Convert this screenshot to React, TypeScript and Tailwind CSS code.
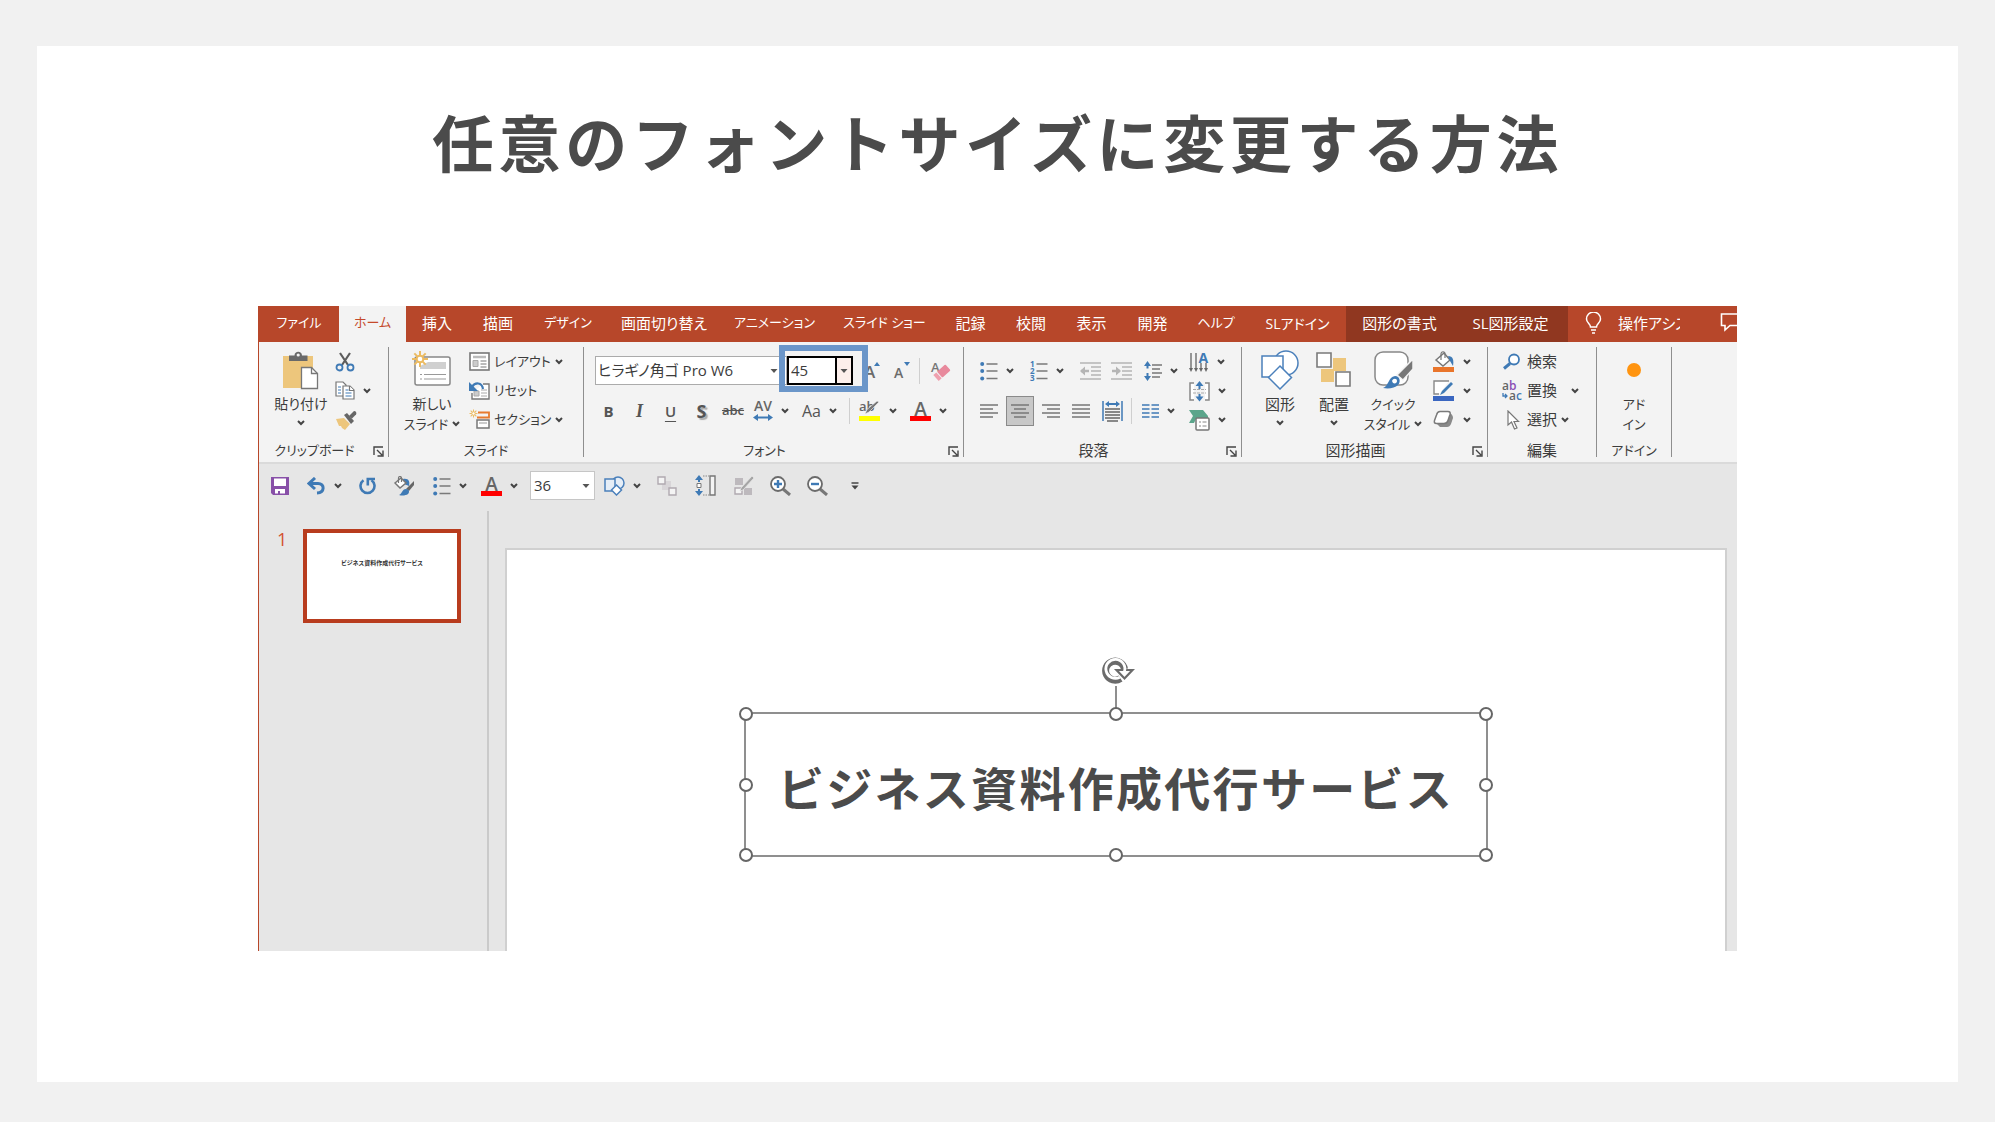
import { useState } from "react"
import type { ReactNode } from "react"
import clsx from "clsx"

const tabs = [
  { label: "ファイル", style: "w-[80px] text-[13px]" },
  { label: "ホーム", style: "w-[67px] text-[13px]" },
  { label: "挿入", style: "w-[62px] text-[15px]" },
  { label: "描画", style: "w-[60px] text-[15px]" },
  { label: "デザイン", style: "w-[80px] text-[13px]" },
  { label: "画面切り替え", style: "w-[112px] text-[15px]" },
  { label: "アニメーション", style: "w-[109px] text-[13px]" },
  { label: "スライド ショー", style: "w-[111px] text-[13px]" },
  { label: "記録", style: "w-[61px] text-[15px]" },
  { label: "校閲", style: "w-[60px] text-[15px]" },
  { label: "表示", style: "w-[61px] text-[15px]" },
  { label: "開発", style: "w-[61px] text-[15px]" },
  { label: "ヘルプ", style: "w-[66px] text-[13px]" },
  { label: "SLアドイン", style: "w-[97px] text-[14px]" },
  { label: "図形の書式", style: "w-[107px] text-[15px] bg-[#903720]" },
  { label: "SL図形設定", style: "w-[115px] text-[15px] bg-[#903720]" },
]

function Chevron() {
  return (
    <svg width="8" height="6" viewBox="0 0 8 6" fill="none" className="shrink-0">
      <path d="M1 1l3 3 3-3" stroke="#444" strokeWidth="2" />
    </svg>
  )
}

function Arrow() {
  return (
    <svg width="8" height="4" viewBox="0 0 8 4" className="shrink-0">
      <path d="M0.5 0h7L4 4z" fill="#555" />
    </svg>
  )
}

type ToolProps = { name: string; className?: string; children: ReactNode; menu?: boolean }

function Tool({ name, className, children, menu }: ToolProps) {
  return (
    <button type="button" aria-label={name} className={clsx("flex shrink-0 items-center gap-2", className)}>
      {children}
      {menu && <Chevron />}
    </button>
  )
}

function Sep({ className }: { className?: string }) {
  return <span className={clsx("h-[26px] w-px shrink-0 bg-[#cfcfcf]", className)} />
}

type GroupProps = { label: string; small?: boolean; className: string; launcher?: boolean; children: ReactNode }

function Group({ label, small, className, launcher, children }: GroupProps) {
  return (
    <section className={clsx("mt-[5px] flex h-[110px] shrink-0 flex-col border-r border-[#8e8e8e]", className)}>
      <div className="flex h-[97px]">{children}</div>
      <div className={clsx("relative flex h-[13px] items-start justify-center", launcher && "pr-[18px]")}>
        <span className={clsx("leading-3", small ? "text-[13px]" : "text-[15px]")}>{label}</span>
        {launcher && (
          <button type="button" aria-label={`${label}の設定`} className="absolute right-1 bottom-0">
            <svg width="11" height="11" viewBox="0 0 11 11" fill="none" stroke="#444" strokeWidth="1.4">
              <path d="M1 9V1h9M4 4l5 5M10 4.500v5.500H4.500" />
            </svg>
          </button>
        )}
      </div>
    </section>
  )
}

function BigButton({ icon, className, children }: { icon: ReactNode; className?: string; children: ReactNode }) {
  return (
    <button type="button" className={clsx("flex flex-col items-center pt-[3px] leading-5", className)}>
      <span className="mb-1 flex h-10 items-center justify-center">{icon}</span>
      {children}
    </button>
  )
}

/* ---- icons ---- */

function PasteIcon() {
  return (
    <svg width="38" height="40" viewBox="0 0 38 40">
      <path d="M1 6h30v32H1z" fill="#edc67c" />
      <path d="M7 5.500h5.500c0-5 7.500-5 7.500 0H25.500V11H7z" fill="#696969" />
      <circle cx="16.200" cy="5" r="1.600" fill="#f3f3f3" />
      <path d="M19.500 17.500h10l6 6v15h-16z" fill="#fff" stroke="#777" strokeWidth="1.300" />
      <path d="M29.500 17.500v6h6" fill="none" stroke="#777" strokeWidth="1.300" />
    </svg>
  )
}

function CutIcon() {
  return (
    <svg width="20" height="20" viewBox="0 0 20 20" fill="none">
      <path d="M5 1l8 12M15 1L7 13" stroke="#5c5c5c" strokeWidth="2.200" />
      <circle cx="4.500" cy="15.500" r="3" stroke="#3f7ab5" strokeWidth="1.800" />
      <circle cx="15.500" cy="15.500" r="3" stroke="#3f7ab5" strokeWidth="1.800" />
    </svg>
  )
}

function CopyIcon() {
  return (
    <svg width="20" height="20" viewBox="0 0 20 20" fill="#fff" stroke="#777" strokeWidth="1.200">
      <path d="M1 1h7l3 3v11H1z" />
      <path d="M3 6h3M3 9h3M3 12h3" stroke="#3f7ab5" />
      <path d="M8 5h7l4 4v9H8z" />
      <path d="M14.500 5v4.500H19" />
      <path d="M10.500 9h3M10.500 12h6M10.500 15h6" stroke="#3f7ab5" />
    </svg>
  )
}

function BrushIcon() {
  return (
    <svg width="22" height="20" viewBox="0 0 22 20">
      <path d="M1 9l8-1 6 6-5 6-3-2-1-2-2 0z" fill="#edc67c" />
      <path d="M9 5l3-2 7 8-3 3z" fill="#666" />
      <path d="M14 6l5-5c2 0 3 2 2 3.500l-4 4z" fill="#666" />
    </svg>
  )
}

function Burst({ x, y, r }: { x: number; y: number; r: number }) {
  const rays = [0, 45, 90, 135]
  return (
    <g stroke="#ecbb62" strokeWidth={r / 4}>
      {rays.map((a) => (
        <path key={a} d={`M${x - r} ${y}h${r * 2}`} transform={`rotate(${a} ${x} ${y})`} />
      ))}
      <circle cx={x} cy={y} r={r / 2.400} fill="#fff" />
    </g>
  )
}

function NewSlideIcon() {
  return (
    <svg width="40" height="38" viewBox="0 0 40 38">
      <rect x="3" y="6" width="35" height="28" rx="2" fill="#fff" stroke="#888" strokeWidth="1.500" />
      <path d="M16 11h18v7H8v-3z" fill="#d0d0d0" />
      <path d="M8 23.500h2M12 23.500h22M8 28h2M12 28h22" stroke="#999" strokeWidth="1.200" />
      <Burst x={8} y={8} r={8} />
    </svg>
  )
}

function LayoutIcon() {
  return (
    <svg width="21" height="19" viewBox="0 0 21 19" fill="none" stroke="#777">
      <rect x="1" y="1" width="19" height="17" strokeWidth="1.600" fill="#fff" />
      <path d="M4 5h13" strokeWidth="2.500" stroke="#bbb" />
      <path d="M4 8.500h5v6H4z" fill="#ccc" stroke="#aaa" />
      <path d="M11.500 9h6M11.500 12h6M11.500 15h6" />
    </svg>
  )
}

function ResetIcon() {
  return (
    <svg width="21" height="19" viewBox="0 0 21 19" fill="none" stroke="#777">
      <path d="M14 3h6v15H3v-6" strokeWidth="1.400" fill="#fff" />
      <path d="M5 10h5v5H5z" fill="#ccc" stroke="#aaa" />
      <path d="M12 9h6M12 12h6M12 15h6" stroke="#aaa" />
      <path d="M14 8C13 1 6 1 3 6" stroke="#3f7ab5" strokeWidth="2.200" />
      <path d="M0 1v9h9z" fill="#3f7ab5" stroke="none" />
    </svg>
  )
}

function SectionIcon() {
  return (
    <svg width="21" height="21" viewBox="0 0 21 21" fill="none">
      <path d="M9 3.500h11v5H8" stroke="#e77b2f" strokeWidth="1.800" />
      <path d="M8 11h12v8H8z" stroke="#777" strokeWidth="1.500" fill="#fff" />
      <path d="M10 14h8" stroke="#999" />
      <Burst x={4.500} y={4.500} r={4} />
    </svg>
  )
}

function FontColorIcon({ bar }: { bar: string }) {
  return (
    <svg width="21" height="22" viewBox="0 0 21 22" className="overflow-visible">
      <text x="10.500" y="16" textAnchor="middle" fontSize="19" fontWeight="600" fill="#666" fontFamily="Open Sans, sans-serif">
        A
      </text>
      <path d="M0 16h21v5H0z" fill={bar} />
    </svg>
  )
}

function HighlightIcon() {
  return (
    <svg width="22" height="22" viewBox="0 0 22 22" className="overflow-visible">
      <text x="0" y="11" fontSize="13" fontWeight="600" fill="#666" fontFamily="Open Sans, sans-serif">
        ab
      </text>
      <path d="M20 2L10 12l-4 2 2-4.500L18 1z" fill="#777" stroke="#f3f3f3" strokeWidth="0.600" />
      <path d="M0 16h21v5H0z" fill="#ff0" />
    </svg>
  )
}

function EraserIcon() {
  return (
    <svg width="20" height="22" viewBox="0 0 20 22" className="overflow-visible">
      <text x="0" y="12" fontSize="13" fontWeight="600" fill="#777" fontFamily="Open Sans, sans-serif">
        A
      </text>
      <g transform="rotate(-42 11 12)">
        <rect x="2.500" y="8.500" width="4" height="8" fill="#f0a0ae" />
        <rect x="7.500" y="8.500" width="11" height="8" rx="1" fill="#e8899c" />
      </g>
    </svg>
  )
}

function GrowIcon({ down }: { down?: boolean }) {
  return (
    <svg width="20" height="20" viewBox="0 0 20 20" className="overflow-visible">
      <text x="1" y="17" fontSize={down ? 14 : 17} fontWeight="600" fill="#6b6b6b" fontFamily="Open Sans, sans-serif">
        A
      </text>
      <path d={down ? "M11 1h6l-3 4z" : "M11 5h6l-3-4z"} fill="#3f7ab5" />
    </svg>
  )
}

function SpacingIcon() {
  return (
    <svg width="20" height="22" viewBox="0 0 20 22" className="overflow-visible">
      <text x="10" y="11" textAnchor="middle" fontSize="14" fontWeight="600" fill="#666" fontFamily="Open Sans, sans-serif">
        AV
      </text>
      <path d="M3 17.500h14" stroke="#3f7ab5" strokeWidth="2" />
      <path d="M5 14v7l-5-3.500zM15 14v7l5-3.500z" fill="#3f7ab5" />
    </svg>
  )
}

function BulletsIcon() {
  return (
    <svg width="18" height="20" viewBox="0 0 18 20">
      <path d="M6.500 3h11M6.500 10h11M6.500 17.500h11" stroke="#7a7a7a" strokeWidth="1.500" />
      <g fill="#3f7ab5">
        <circle cx="2.200" cy="3" r="2" />
        <circle cx="2.200" cy="10" r="2" />
        <circle cx="2.200" cy="17.500" r="2" />
      </g>
    </svg>
  )
}

function NumbersIcon() {
  return (
    <svg width="18" height="22" viewBox="0 0 18 22" className="overflow-visible">
      <path d="M6.500 4h11M6.500 11h11M6.500 18.500h11" stroke="#7a7a7a" strokeWidth="1.500" />
      <g fontSize="8" fontWeight="700" fill="#3f7ab5" fontFamily="Open Sans, sans-serif">
        <text x="0" y="7">1</text>
        <text x="0" y="14">2</text>
        <text x="0" y="21">3</text>
      </g>
    </svg>
  )
}

function IndentIcon({ right }: { right?: boolean }) {
  return (
    <svg width="21" height="18" viewBox="0 0 21 18" stroke="#b5b5b5" strokeWidth="1.500">
      <path d="M0 1h21M11 5h10M11 9h10M11 13h10M0 17h21" />
      <path d="M1 9h8" strokeWidth="2.500" />
      <path d={right ? "M5 4.500L10 9l-5 4.500z" : "M5 4.500L0 9l5 4.500z"} fill="#b5b5b5" stroke="none" />
    </svg>
  )
}

function LineSpacingIcon() {
  return (
    <svg width="18" height="22" viewBox="0 0 18 22">
      <path d="M8 5h10M8 9h8M8 13h10M8 17h8" stroke="#777" strokeWidth="1.500" />
      <path d="M3.500 4v4.500M3.500 13v5" stroke="#3f7ab5" strokeWidth="2" />
      <path d="M0 6h7L3.500 1zM0 16h7l-3.500 5z" fill="#3f7ab5" />
    </svg>
  )
}

function AlignIcon({ d }: { d: string }) {
  return (
    <svg width="18" height="16" viewBox="0 0 18 16" stroke="#777" strokeWidth="1.500">
      <path d={d} />
    </svg>
  )
}

function DistributeIcon() {
  return (
    <svg width="21" height="22" viewBox="0 0 21 22">
      <path d="M1 1v20M20 1v20" stroke="#3f7ab5" strokeWidth="1.500" />
      <path d="M5 4h11" stroke="#3f7ab5" strokeWidth="2" />
      <path d="M7 1v6L3 4zM14 1v6l4-3z" fill="#3f7ab5" />
      <path d="M3 9h15M3 12h15M3 15h15M3 18h15M5 21h11" stroke="#666" strokeWidth="1.700" />
    </svg>
  )
}

function ColumnsIcon() {
  return (
    <svg width="17" height="14" viewBox="0 0 17 14" stroke="#3f7ab5" strokeWidth="1.600">
      <path d="M0 1h7.500M0 5h7.500M0 9h7.500M0 13h7.500M9.500 1H17M9.500 5H17M9.500 9H17M9.500 13H17" />
    </svg>
  )
}

function TextDirectionIcon() {
  return (
    <svg width="20" height="22" viewBox="0 0 20 22" className="overflow-visible">
      <path d="M2 2v17M7 2v17M12 12v7M17 12v7" stroke="#777" strokeWidth="1.500" />
      <path d="M0 17h4l-2 4zM5 17h4l-2 4zM10 17h4l-2 4zM15 17h4l-2 4z" fill="#666" />
      <text x="9.500" y="12" fontSize="14" fontWeight="700" fill="#3f7ab5" fontFamily="Open Sans, sans-serif">
        A
      </text>
    </svg>
  )
}

function TextAlignIcon() {
  return (
    <svg width="21" height="22" viewBox="0 0 21 22">
      <path d="M5 3H1v17h4M16 3h4v17h-4" fill="#fff" stroke="#888" strokeWidth="1.500" />
      <path d="M4 9.500h13M4 13h13" stroke="#aaa" strokeWidth="1.200" strokeDasharray="3 1" />
      <path d="M10.500 4v5M10.500 14v4" stroke="#3f7ab5" strokeWidth="2" />
      <path d="M6.500 6h8l-4-5zM6.500 16.500h8l-4 5z" fill="#3f7ab5" />
    </svg>
  )
}

function SmartArtIcon() {
  return (
    <svg width="21" height="22" viewBox="0 0 21 22">
      <path d="M0 1h14l5 6v3H7l-2 4H0l4-7z" fill="#5ba58b" />
      <rect x="7" y="9" width="13" height="12" rx="1" fill="#fff" stroke="#777" strokeWidth="1.500" />
      <path d="M10 13h2M13.500 13h4M10 17h2M13.500 17h4" stroke="#888" strokeWidth="1.200" />
    </svg>
  )
}

function ShapesIcon() {
  return (
    <svg width="38" height="40" viewBox="0 0 38 40" fill="#fff" stroke="#4b80bb" strokeWidth="1.500">
      <circle cx="25" cy="13" r="12" />
      <path d="M1 6h21v21H1z" />
      <path d="M19 16l11.500 11.500L19 39 7.500 27.500z" />
    </svg>
  )
}

function ArrangeIcon() {
  return (
    <svg width="36" height="36" viewBox="0 0 36 36">
      <path d="M17 6h13v13H17z" fill="#edc67c" />
      <path d="M5 17h13v13H5z" fill="#edc67c" />
      <path d="M1 1h14v14H1zM20 20h14v14H20z" fill="#fff" stroke="#7a7a7a" strokeWidth="1.600" />
    </svg>
  )
}

function QuickStyleIcon() {
  return (
    <svg width="40" height="40" viewBox="0 0 40 40">
      <rect x="2" y="2" width="33" height="33" rx="8" fill="#fff" stroke="#888" strokeWidth="1.500" />
      <path d="M40 9v10L30 30l-6-5z" fill="#777" stroke="#f3f3f3" strokeWidth="1.500" />
      <path d="M10 38c6-2 5-11 12-12 5 0 6 6 3 9-3 3-9 4-15 3z" fill="#3f7ab5" />
      <path d="M19 31c1-3 5-3 5 0 0 2-2 3-4 2z" fill="#fff" />
    </svg>
  )
}

function FillIcon() {
  return (
    <svg width="22" height="22" viewBox="0 0 22 22">
      <path d="M3 9l8-7 6 7-7 6z" fill="#fff" stroke="#777" strokeWidth="1.500" />
      <path d="M8 9V3c0-3 4-3 4 0v4" fill="none" stroke="#777" strokeWidth="1.200" />
      <path d="M15 5c5 0 6 4 5 10l-3-5z" fill="#3f7ab5" />
      <path d="M0 16h21v5H0z" fill="#e9752b" />
    </svg>
  )
}

function OutlineIcon() {
  return (
    <svg width="22" height="22" viewBox="0 0 22 22">
      <path d="M16 1H1v13h5" fill="#fff" stroke="#888" strokeWidth="1.400" />
      <path d="M18 2l2 2-9 9-4 2 2-4z" fill="#3f7ab5" />
      <path d="M0 16h21v5H0z" fill="#3a66c0" />
    </svg>
  )
}

function EffectIcon() {
  return (
    <svg width="22" height="20" viewBox="0 0 22 20">
      <path d="M4 14l3 3h7c2 0 3-1 4-3l2-6c0-2-1-4-3-5z" fill="#8a8a8a" />
      <path d="M7 1.500h8c2 0 2.500 1 2 3l-2 6c-.5 2-2 3-4 3H3.500c-2 0-2.500-1-2-3l2-5.500c.5-2 1.500-3.500 3.500-3.500z" fill="#fff" stroke="#7a7a7a" strokeWidth="1.500" />
    </svg>
  )
}

function SearchIcon() {
  return (
    <svg width="20" height="18" viewBox="0 0 20 18" fill="none" stroke="#3f7ab5">
      <circle cx="11" cy="6.500" r="5" strokeWidth="1.800" fill="#fff" />
      <path d="M7 10.500l-6 5" strokeWidth="3" />
    </svg>
  )
}

function ReplaceIcon() {
  return (
    <svg
      width="20"
      height="22"
      viewBox="0 0 20 22"
      fontSize="12"
      fontWeight="600"
      fontFamily="Open Sans, sans-serif"
      className="overflow-visible"
    >
      <text x="-1" y="10" fill="#666">a</text>
      <text x="6" y="10" fill="#8a4fb5">b</text>
      <text x="6" y="20" fill="#666">a</text>
      <text x="13" y="20" fill="#3f7ab5">c</text>
      <path d="M0 13v3h4M2 14l2 2-2 2" fill="none" stroke="#3f7ab5" strokeWidth="1.300" />
    </svg>
  )
}

function PointerIcon() {
  return (
    <svg width="20" height="20" viewBox="0 0 20 20">
      <path d="M5 1v14l3.500-3 3 7 2.500-1-3-6.500h4.500z" fill="#fff" stroke="#777" strokeWidth="1.200" />
    </svg>
  )
}

function SaveIcon() {
  return (
    <svg width="18" height="18" viewBox="0 0 18 18">
      <path d="M0 0h18v18H2l-2-2z" fill="#8850a8" />
      <path d="M3 1.500h12V9H3z" fill="#fff" />
      <path d="M4 12h10v4.500H9V14H7v2.500H4z" fill="#fff" />
    </svg>
  )
}

function UndoIcon() {
  return (
    <svg width="19" height="18" viewBox="0 0 19 18" fill="none" stroke="#3f7ab5" strokeWidth="3">
      <path d="M8 1L2 6.500 8 12" />
      <path d="M2 6.500h9c7 0 7 9-1 9.500" />
    </svg>
  )
}

function RedoIcon() {
  return (
    <svg width="18" height="18" viewBox="0 0 18 18" fill="none" stroke="#3f7ab5" strokeWidth="2.600">
      <path d="M5.500 3.200a7 7 0 1 0 8 0" />
      <path d="M9.800 8.500V2H17" />
    </svg>
  )
}

function StylePaintIcon() {
  return (
    <svg width="21" height="20" viewBox="0 0 21 20">
      <path d="M9 3c6-1 7 3 6 7l-5-2z" fill="#3f7ab5" />
      <path d="M1 7l6-5 5 5-6 5z" fill="#fff" stroke="#777" strokeWidth="1.500" />
      <path d="M4.500 7V2c0-2 3-2 3 0v4" fill="none" stroke="#777" strokeWidth="1.200" />
      <path d="M20 5v4l-5 6-3-2z" fill="#666" />
      <path d="M5 19c3-1 3-6 7-6 3 0 4 3 2 5-2 1.500-6 2-9 1z" fill="#3f7ab5" />
    </svg>
  )
}

function SmallShapesIcon() {
  return (
    <svg width="21" height="20" viewBox="0 0 21 20" fill="#e6eef7" stroke="#4b80bb" strokeWidth="1.500">
      <circle cx="14" cy="7" r="6" />
      <path d="M1 3h10v12H1z" />
      <path d="M12.500 9l5 5-5 5-5-5z" fill="#fff" />
    </svg>
  )
}

function GroupIcon() {
  return (
    <svg width="20" height="20" viewBox="0 0 20 20">
      <path d="M5 5h9v9H5z" fill="#d8d5d8" />
      <path d="M1 1h7v7H1zM12 12h7v7h-7z" fill="#f4f4f4" stroke="#b0a9b0" strokeWidth="1.400" />
    </svg>
  )
}

function HeightIcon() {
  return (
    <svg width="21" height="21" viewBox="0 0 21 21">
      <path d="M2 8.500h4v4H2z" fill="#fff" stroke="#777" />
      <path d="M4 4v3M4 14v3" stroke="#3f7ab5" strokeWidth="2" />
      <path d="M0 5h8L4 0zM0 16h8l-4 5z" fill="#3f7ab5" />
      <path d="M8 1h6M8 20h6" stroke="#888" strokeDasharray="1.500 1" />
      <path d="M15 1h5v19h-5z" fill="#f4f4f4" stroke="#777" strokeWidth="1.400" />
    </svg>
  )
}

function SelectPaneIcon() {
  return (
    <svg width="20" height="20" viewBox="0 0 20 20">
      <path d="M1 2h8v7H1zM10 12h8v7h-8z" fill="#bdb9bd" />
      <path d="M1 12h7v6H1z" fill="#f4f4f4" stroke="#b0a9b0" strokeWidth="1.400" />
      <path d="M18 0l2 2L9 14l-3 1 1-3z" fill="#a5a5a5" stroke="#e6e6e6" strokeWidth="0.800" />
    </svg>
  )
}

function ZoomIcon({ plus }: { plus?: boolean }) {
  return (
    <svg width="21" height="20" viewBox="0 0 21 20" fill="none">
      <path d="M13 13l7 6" stroke="#777" strokeWidth="3" />
      <circle cx="8" cy="8" r="7" stroke="#6b6b6b" strokeWidth="1.800" fill="#fff" />
      <path d={plus ? "M4 8h8M8 4v8" : "M4 8h8"} stroke="#3f7ab5" strokeWidth="2.400" />
    </svg>
  )
}

function RotateIcon() {
  return (
    <svg width="34" height="28" viewBox="0 0 34 28" fill="none">
      <path d="M19.500 22.500A9.500 9.500 0 1 1 23.500 13" stroke="#6b6b6b" strokeWidth="7" />
      <path d="M15.500 14h16l-8 8.500z" fill="#fff" stroke="#6b6b6b" strokeWidth="2.200" />
      <path d="M18.800 21.200A9.500 9.500 0 1 1 23.500 15.500" stroke="#fff" strokeWidth="2.800" />
    </svg>
  )
}

/* ---- ribbon ---- */

function Ribbon() {
  const [font, setFont] = useState("ヒラギノ角ゴ Pro W6")
  const [size, setSize] = useState("45")

  return (
    <div className="flex h-[120px] bg-[#f3f3f3] text-[#3c3c3c]">
      <Group label="クリップボード" small launcher className="w-[130px]">
        <BigButton icon={<PasteIcon />} className="ml-3 w-[60px] text-[14px]">
          <span>貼り付け</span>
          <span className="flex h-[18px] items-center">
            <Chevron />
          </span>
        </BigButton>
        <div className="ml-1 flex flex-col">
          <Tool name="切り取り" className="h-[29px]"><CutIcon /></Tool>
          <Tool name="コピー" menu className="h-[29px]"><CopyIcon /></Tool>
          <Tool name="書式のコピー" className="h-[29px]"><BrushIcon /></Tool>
        </div>
      </Group>

      <Group label="スライド" small className="w-[195px]">
        <BigButton icon={<NewSlideIcon />} className="ml-3 w-[62px] text-[13px]">
          <span className="text-[14px]">新しい</span>
          <span className="flex items-center gap-1">
            スライド
            <Chevron />
          </span>
        </BigButton>
        <div className="ml-[6px] flex flex-col text-[13px]">
          <button type="button" className="flex h-[29px] items-center gap-1">
            <LayoutIcon />
            レイアウト
            <Chevron />
          </button>
          <button type="button" className="flex h-[29px] items-center gap-1">
            <ResetIcon />
            リセット
          </button>
          <button type="button" className="flex h-[29px] items-center gap-1">
            <SectionIcon />
            セクション
            <Chevron />
          </button>
        </div>
      </Group>

      <Group label="フォント" small launcher className="w-[380px]">
        <div className="flex flex-col gap-[11px] pt-[9px]">
          <div className="flex h-[29px] items-center pl-[11px]">
            <div className="flex h-[29px] w-[192px] items-center border border-[#ababab] bg-white pr-2">
              <select
                aria-label="フォント"
                value={font}
                onChange={(e) => setFont(e.target.value)}
                className="h-full grow appearance-none pl-[2px] text-[15px] outline-none"
              >
                <option>ヒラギノ角ゴ Pro W6</option>
                <option>メイリオ</option>
              </select>
              <Arrow />
            </div>
            <div className="relative flex h-[29px] w-[66px] border-2 border-black bg-white">
              <input
                aria-label="フォント サイズ"
                value={size}
                onChange={(e) => setSize(e.target.value)}
                className="w-[46px] pl-[2px] text-[15px] outline-none"
              />
              <button
                type="button"
                aria-label="サイズの一覧"
                className="flex grow items-center justify-center border-l-2 border-black bg-[#fcefeb]"
              >
                <Arrow />
              </button>
              {/* highlight frame */}
              <span className="pointer-events-none absolute -top-[13px] -left-[10px] z-10 h-[47px] w-[89px] border-[6px] border-[#6b96c9]" />
            </div>
            <Tool name="拡大" className="ml-[10px]"><GrowIcon /></Tool>
            <Tool name="縮小" className="ml-[10px]"><GrowIcon down /></Tool>
            <Sep className="ml-[6px]" />
            <Tool name="書式のクリア" className="ml-[11px]"><EraserIcon /></Tool>
          </div>
          <div className="flex h-[30px] items-center pl-[9px] font-['Open_Sans','Noto_Sans',sans-serif] text-[#555]">
            <button type="button" className="w-[31px] text-[15px] font-bold">B</button>
            <button type="button" className="w-[31px] font-['Liberation_Serif',serif] text-[18px] font-bold italic">I</button>
            <button type="button" className="w-[31px] text-[15px] font-semibold underline underline-offset-4">U</button>
            <button type="button" className="w-[31px] text-[18px] font-bold [text-shadow:2px_2px_1px_#aaa]">S</button>
            <button type="button" className="w-[32px] text-[13px] font-semibold line-through">abc</button>
            <Tool name="文字の間隔" menu className="ml-1"><SpacingIcon /></Tool>
            <button type="button" className="ml-[13px] flex items-center gap-2 text-[16px]">
              Aa
              <Chevron />
            </button>
            <Sep className="ml-3" />
            <Tool name="蛍光ペン" menu className="ml-[9px]"><HighlightIcon /></Tool>
            <Tool name="フォントの色" menu className="ml-[13px]"><FontColorIcon bar="#f00" /></Tool>
          </div>
        </div>
      </Group>

      <Group label="段落" launcher className="w-[278px]">
        <div className="flex w-[225px] flex-col gap-[11px] pt-[9px] pl-4">
          <div className="flex h-[29px] items-center">
            <Tool name="箇条書き" menu><BulletsIcon /></Tool>
            <Tool name="段落番号" menu className="ml-4"><NumbersIcon /></Tool>
            <Tool name="インデントを減らす" className="ml-4"><IndentIcon /></Tool>
            <Tool name="インデントを増やす" className="ml-[10px]"><IndentIcon right /></Tool>
            <Tool name="行間" menu className="ml-3"><LineSpacingIcon /></Tool>
          </div>
          <div className="flex h-[30px] items-center">
            <Tool name="左揃え"><AlignIcon d="M0 2h18M0 6h13M0 10h18M0 14h13" /></Tool>
            <Tool name="中央揃え" className="ml-2 h-[30px] w-7 justify-center border border-[#8a8a8a] bg-[#c8c8c8]">
              <AlignIcon d="M0 2h18M3 6h12M0 10h18M3 14h12" />
            </Tool>
            <Tool name="右揃え" className="ml-2"><AlignIcon d="M0 2h18M5 6h13M0 10h18M5 14h13" /></Tool>
            <Tool name="両端揃え" className="ml-3"><AlignIcon d="M0 2h18M0 6h18M0 10h18M0 14h18" /></Tool>
            <Tool name="均等割り付け" className="ml-3"><DistributeIcon /></Tool>
            <Sep className="ml-2" />
            <Tool name="段組み" menu className="ml-[10px]"><ColumnsIcon /></Tool>
          </div>
        </div>
        <div className="flex flex-col">
          <Tool name="文字列の方向" menu className="h-[29px]"><TextDirectionIcon /></Tool>
          <Tool name="文字の配置" menu className="h-[29px]"><TextAlignIcon /></Tool>
          <Tool name="SmartArt に変換" menu className="h-[29px]"><SmartArtIcon /></Tool>
        </div>
      </Group>

      <Group label="図形描画" launcher className="w-[246px]">
        <BigButton icon={<ShapesIcon />} className="ml-[10px] w-14 text-[15px]">
          <span>図形</span>
          <span className="flex h-[18px] items-center"><Chevron /></span>
        </BigButton>
        <BigButton icon={<ArrangeIcon />} className="w-[52px] text-[15px]">
          <span>配置</span>
          <span className="flex h-[18px] items-center"><Chevron /></span>
        </BigButton>
        <BigButton icon={<QuickStyleIcon />} className="w-[66px] text-[13px]">
          <span>クイック</span>
          <span className="flex items-center gap-1">
            スタイル
            <Chevron />
          </span>
        </BigButton>
        <div className="ml-[7px] flex flex-col">
          <Tool name="図形の塗りつぶし" menu className="h-[29px]"><FillIcon /></Tool>
          <Tool name="図形の枠線" menu className="h-[29px]"><OutlineIcon /></Tool>
          <Tool name="図形の効果" menu className="h-[29px]"><EffectIcon /></Tool>
        </div>
      </Group>

      <Group label="編集" className="w-[109px]">
        <div className="flex flex-col pl-[15px] text-[15px]">
          <button type="button" className="flex h-[29px] items-center gap-1">
            <SearchIcon />
            検索
          </button>
          <button type="button" className="flex h-[29px] items-center gap-1">
            <ReplaceIcon />
            <span className="mr-[10px]">置換</span>
            <Chevron />
          </button>
          <button type="button" className="flex h-[29px] items-center gap-1">
            <PointerIcon />
            選択
            <Chevron />
          </button>
        </div>
      </Group>

      <Group label="アドイン" small className="w-[75px]">
        <BigButton
          icon={
            <svg width="16" height="16" viewBox="0 0 16 16">
              <circle cx="8" cy="8" r="7" fill="#ff9410" />
            </svg>
          }
          className="w-full text-[13px]"
        >
          <span>アド</span>
          <span>イン</span>
        </BigButton>
      </Group>
    </div>
  )
}

function QuickAccess() {
  const [size, setSize] = useState("36")

  return (
    <div className="flex h-[49px] items-center border-t-2 border-[#dadada] pb-1 pl-3 text-[#3c3c3c]">
      <Tool name="上書き保存"><SaveIcon /></Tool>
      <Tool name="元に戻す" menu className="ml-[18px]"><UndoIcon /></Tool>
      <Tool name="繰り返し" className="ml-4"><RedoIcon /></Tool>
      <Tool name="書式の貼り付け" className="ml-[18px]"><StylePaintIcon /></Tool>
      <Tool name="箇条書き" menu className="ml-[18px]"><BulletsIcon /></Tool>
      <Tool name="フォントの色" menu className="ml-[14px]"><FontColorIcon bar="#f00" /></Tool>
      <div className="ml-3 flex h-[29px] w-[65px] items-center border border-[#c6c6c6] bg-white pr-1">
        <input
          aria-label="サイズ"
          value={size}
          onChange={(e) => setSize(e.target.value)}
          className="w-0 grow pl-[3px] text-[15px] outline-none"
        />
        <Arrow />
      </div>
      <Tool name="図形" menu className="ml-[9px]"><SmallShapesIcon /></Tool>
      <Tool name="グループ化" className="ml-4"><GroupIcon /></Tool>
      <Tool name="高さを揃える" className="ml-[18px]"><HeightIcon /></Tool>
      <Tool name="選択" className="ml-[18px]"><SelectPaneIcon /></Tool>
      <Tool name="拡大" className="ml-4"><ZoomIcon plus /></Tool>
      <Tool name="縮小" className="ml-4"><ZoomIcon /></Tool>
      <Tool name="その他" className="ml-[22px]">
        <svg width="10" height="8" viewBox="0 0 10 8">
          <path d="M1.500 1h7" stroke="#444" strokeWidth="1.500" />
          <path d="M1.500 3.500h7L5 7.500z" fill="#444" />
        </svg>
      </Tool>
    </div>
  )
}

const handles = [
  "left-0 top-0",
  "left-1/2 top-0",
  "left-full top-0",
  "left-0 top-1/2",
  "left-full top-1/2",
  "left-0 top-full",
  "left-1/2 top-full",
  "left-full top-full",
]

function Workspace() {
  return (
    <div className="flex h-[440px]">
      <aside className="flex w-[230px] shrink-0 items-start border-r-2 border-[#cacaca] pt-[18px] pl-[18px]">
        <span className="w-[26px] text-[18px] leading-5 text-[#d35230]">1</span>
        <div className="flex h-[94px] w-[158px] justify-center border-4 border-[#b83c1e] bg-white pt-[26px]">
          <span className="text-[6px] leading-[8px] font-bold whitespace-nowrap text-[#333]">ビジネス資料作成代行サービス</span>
        </div>
      </aside>
      <main className="mt-[37px] mr-[10px] ml-4 flex grow justify-center border-2 border-b-0 border-[#d0d0d0] bg-white pt-[162px]">
        <div className="relative flex h-[145px] w-[744px] items-center justify-center border-2 border-[#8f8f8f] pt-2">
          <p className="text-[46px] font-bold tracking-wider whitespace-nowrap text-[#4b4b4b] [font-feature-settings:normal]">
            ビジネス資料作成代行サービス
          </p>
          <span className="absolute bottom-full left-1/2 h-7 w-[2px] -translate-x-1/2 bg-[#8f8f8f]" />
          <span className="absolute -top-[58px] left-1/2 -translate-x-1/2 pl-1">
            <RotateIcon />
          </span>
          {handles.map((pos) => (
            <span
              key={pos}
              className={clsx("absolute size-[14px] -translate-1/2 rounded-full border-2 border-[#666] bg-white", pos)}
            />
          ))}
        </div>
      </main>
    </div>
  )
}

export default function App() {
  const [active, setActive] = useState("ホーム")

  return (
    <div className="flex min-h-screen bg-[#f1f1f1] px-[37px] pt-[46px] pb-10 font-['Noto_Sans_CJK_JP',sans-serif]">
      <div className="w-full bg-white pt-16">
        <h1 className="text-center text-[62px] leading-[62px] font-bold tracking-[0.075em] text-[#4b4b4b]">
          任意のフォントサイズに変更する方法
        </h1>

        <div className="mx-auto mt-[134px] w-full max-w-[1479px] overflow-hidden border-l border-[#b7472a] bg-[#e6e6e6] font-['Open_Sans','Noto_Sans_CJK_JP',sans-serif] [font-feature-settings:'palt']">
          <nav className="flex h-9 bg-[#b7472a] text-white">
            {tabs.map((tab) => (
              <button
                key={tab.label}
                type="button"
                onClick={() => setActive(tab.label)}
                className={clsx(
                  "h-9 shrink-0 pb-[2px] whitespace-nowrap",
                  tab.style,
                  tab.label === active && "bg-[#f3f3f3] text-[#c5492a]",
                )}
              >
                {tab.label}
              </button>
            ))}
            <button type="button" className="ml-[17px] flex shrink-0 items-center gap-4 pb-[2px] text-[15px]">
              <svg width="17" height="22" viewBox="0 0 17 22" fill="none" stroke="#fff" strokeWidth="1.500">
                <path d="M5.500 15c0-3-4-4-4-8a7 7 0 0 1 14 0c0 4-4 5-4 8z" />
                <path d="M6 18h5M7 21h3" />
              </svg>
              <span className="w-[62px] overflow-hidden text-left whitespace-nowrap">操作アシスト</span>
            </button>
            <button type="button" aria-label="コメント" className="ml-auto shrink-0 pb-1">
              <svg width="17" height="20" viewBox="0 0 17 20" fill="none" stroke="#fff" strokeWidth="1.600">
                <path d="M18 2H1.500v11.500H5V18l5-4.500h8" />
              </svg>
            </button>
          </nav>
          <Ribbon />
          <QuickAccess />
          <Workspace />
        </div>
      </div>
    </div>
  )
}
